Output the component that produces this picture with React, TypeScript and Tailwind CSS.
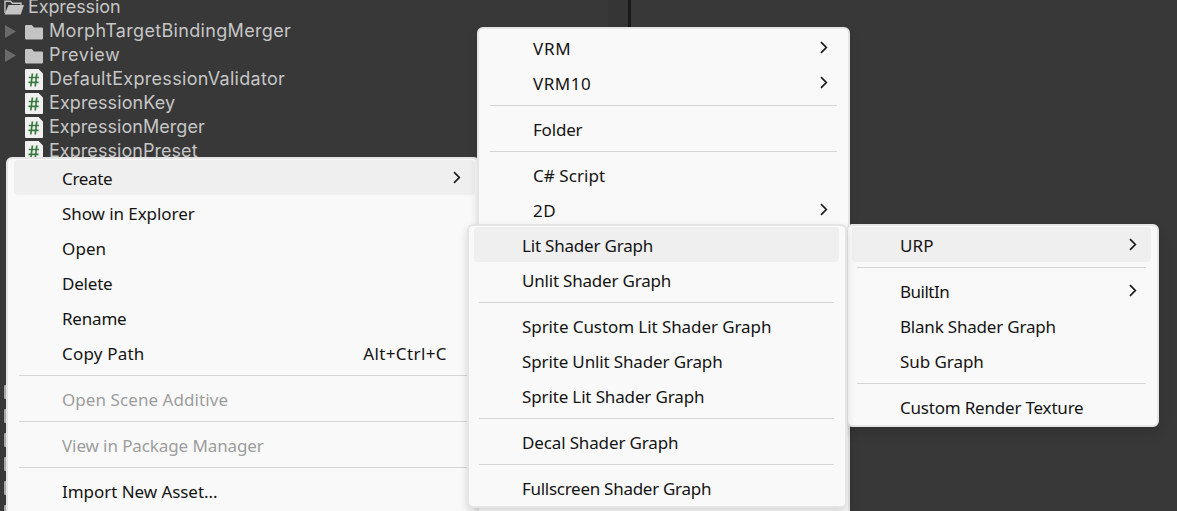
import React from "react";

type Item = {
  label?: string;
  track?: string;
  arrow?: boolean;
  shortcut?: string;
  disabled?: boolean;
  active?: boolean;
};

const SEP: Item = {};

function Chevron() {
  return (
    <svg width="8" height="13" viewBox="0 0 8 13" className="mb-px shrink-0" fill="none" stroke="#1c1c1c" strokeWidth="1.7">
      <path d="M1 1.2L6.3 6.5L1 11.8" />
    </svg>
  );
}

function Menu({ items, className, row, line }: { items: Item[]; className: string; row: string; line: string }) {
  return (
    <div
      className={`absolute rounded-[6px] border-2 border-[#e5e5e5] bg-[#f9f9f9] pt-px pb-px text-[#141414] ${className}`}
    >
      {items.map((it, i) =>
        it.label ? (
          <div
            key={i}
            className={`flex h-[35px] items-center rounded-[4px] ${row} ${it.active ? "bg-[#efefef]" : ""} ${it.disabled ? "text-[#9d9d9d]" : ""}`}
          >
            <span className={`flex-1 pt-[2px] whitespace-nowrap ${it.track ?? "tracking-[-0.2px]"}`}>{it.label}</span>
            {it.shortcut && <span className="mr-[14px] pt-[2px] whitespace-nowrap tracking-[0.4px]">{it.shortcut}</span>}
            {it.arrow && <Chevron />}
          </div>
        ) : (
          <div key={i} className={`my-[5px] h-px bg-[#d5d5d5] ${line}`} />
        ),
      )}
    </div>
  );
}

function FolderIcon() {
  return (
    <svg width="18" height="15" viewBox="0 0 18 15" fill="#c4c4c4">
      <path d="M0 1.2Q0 0 1.2 0H6.8L9 2.4H16.8Q18 2.4 18 3.6V13.3Q18 14.5 16.8 14.5H1.2Q0 14.5 0 13.3Z" />
    </svg>
  );
}

function OpenFolderIcon() {
  return (
    <svg width="20" height="15" viewBox="0 0 20 15">
      <path d="M1 13V1.2H6.5L8.5 3.2H17V5.5" fill="none" stroke="#c4c4c4" strokeWidth="1.4" />
      <path d="M4.5 5H20L16.7 14.5H0.6Z" fill="#c4c4c4" />
    </svg>
  );
}

function ScriptIcon() {
  return (
    <svg width="18" height="21" viewBox="0 0 18 21">
      <path d="M0 1Q0 0 1 0H13.5L18 4.5V20Q18 21 17 21H1Q0 21 0 20Z" fill="#f0f0f0" />
      <path d="M7.4 4.5L5.8 17.5M11.8 4.5L10.2 17.5M3.8 8.5H14M3.5 13.3H13.6" stroke="#397a3f" strokeWidth="1.7" fill="none" />
    </svg>
  );
}

const tree = [
  { kind: "folder", label: "MorphTargetBindingMerger", track: "tracking-[0.33px]" },
  { kind: "folder", label: "Preview", track: "tracking-[0.55px]" },
  { kind: "script", label: "DefaultExpressionValidator", track: "tracking-[0.3px]" },
  { kind: "script", label: "ExpressionKey", track: "tracking-[0.08px]" },
  { kind: "script", label: "ExpressionMerger", track: "tracking-[0.05px]" },
  { kind: "script", label: "ExpressionPreset", track: "tracking-[0.05px]" },
];

const contextItems: Item[] = [
  { label: "Create", arrow: true, active: true, track: "tracking-[-0.35px]" },
  { label: "Show in Explorer", track: "tracking-[-0.07px]" },
  { label: "Open", track: "tracking-[0.1px]" },
  { label: "Delete" },
  { label: "Rename" },
  { label: "Copy Path", shortcut: "Alt+Ctrl+C", track: "tracking-[0.2px]" },
  SEP,
  { label: "Open Scene Additive", disabled: true, track: "tracking-[0.07px]" },
  SEP,
  { label: "View in Package Manager", disabled: true, track: "tracking-[-0.1px]" },
  SEP,
  { label: "Import New Asset...", track: "tracking-[-0.05px]" },
];

const createItems: Item[] = [
  { label: "VRM", arrow: true, track: "tracking-[0.8px]" },
  { label: "VRM10", arrow: true, track: "tracking-[0.5px]" },
  SEP,
  { label: "Folder" },
  SEP,
  { label: "C# Script", track: "tracking-[0.05px]" },
  { label: "2D", arrow: true, track: "tracking-[0.6px]" },
];

const urpItems: Item[] = [
  { label: "Lit Shader Graph", active: true },
  { label: "Unlit Shader Graph" },
  SEP,
  { label: "Sprite Custom Lit Shader Graph", track: "tracking-[-0.08px]" },
  { label: "Sprite Unlit Shader Graph", track: "tracking-[-0.14px]" },
  { label: "Sprite Lit Shader Graph", track: "tracking-[-0.14px]" },
  SEP,
  { label: "Decal Shader Graph", track: "tracking-[-0.14px]" },
  SEP,
  { label: "Fullscreen Shader Graph", track: "tracking-[-0.28px]" },
];

const shaderItems: Item[] = [
  { label: "URP", arrow: true, active: true, track: "tracking-[0.1px]" },
  SEP,
  { label: "BuiltIn", arrow: true, track: "tracking-[-0.5px]" },
  { label: "Blank Shader Graph" },
  { label: "Sub Graph", track: "tracking-[-0.05px]" },
  SEP,
  { label: "Custom Render Texture" },
];

export default function App() {
  return (
    <div className="relative h-[511px] w-[1177px] overflow-hidden bg-[#383838] font-['Noto_Sans',sans-serif] text-[17px] tracking-[-0.2px]">
      <div className="flex h-full">
        <div className="w-[608px] font-['Inter',sans-serif] text-[18px] text-[#c6c6c6]">
          <div className="flex h-[19px] items-start leading-[14px]">
            <div className="ml-1 w-6">
              <OpenFolderIcon />
            </div>
            <span className="tracking-[-0.1px]">Expression</span>
          </div>
          {tree.map((t) => (
            <div key={t.label} className="flex h-6 items-center">
              <div className="w-[25px] pl-[5px]">
                {t.kind === "folder" && (
                  <svg width="12" height="13" viewBox="0 0 12 13" fill="#6a6a6a">
                    <path d="M0 0L11 6.5L0 13Z" />
                  </svg>
                )}
              </div>
              <div className={t.kind === "folder" ? "w-6 pt-[2px]" : "w-6 pt-px"}>
                {t.kind === "folder" ? <FolderIcon /> : <ScriptIcon />}
              </div>
              <span className={`pb-px ${t.track}`}>{t.label}</span>
            </div>
          ))}
          <div className="ml-1 flex flex-col gap-[10px] pt-[222px]">
            {[0, 1, 2, 3, 4, 5].map((n) => (
              <div key={n} className="h-[14px] w-[18px] shrink-0 rounded-[1px] bg-[#a8a8a8]" />
            ))}
          </div>
        </div>
        <div className="w-5 bg-[#353535]" />
        <div className="w-[3px] bg-[#191919]" />
      </div>

      <Menu items={contextItems} className="top-[157px] left-[6px] h-[400px] w-[474px]" row="ml-[6px] mr-[3px] pl-[48px] pr-[14px]" line="ml-[11px] mr-[10px]" />
      <Menu
        items={createItems}
        className="top-[27px] left-[477px] h-[500px] w-[373px] shadow-[0_4px_8px_rgba(0,0,0,0.12)]"
        row="mx-[6px] pl-[48px] pr-[14px]"
        line="mx-[11px]"
      />
      <Menu
        items={shaderItems}
        className="top-[224px] left-[846px] w-[313px] shadow-[0_6px_12px_rgba(0,0,0,0.14)]"
        row="ml-[4px] mr-[6px] pl-[48px] pr-[14px]"
        line="ml-[9px] mr-[11px]"
      />
      <Menu
        items={urpItems}
        className="top-[224px] left-[467px] w-[380px] shadow-[0_4px_8px_rgba(0,0,0,0.14)]"
        row="ml-[5px] mr-[6px] pl-[48px]"
        line="ml-[10px] mr-[11px]"
      />
    </div>
  );
}
